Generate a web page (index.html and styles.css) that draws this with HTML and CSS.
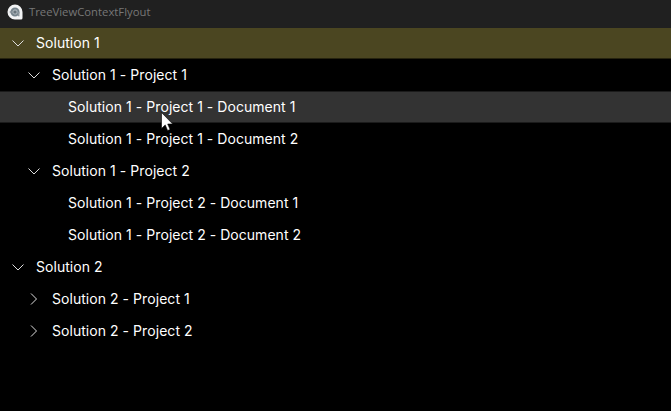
FILE: index.html
```html
<!DOCTYPE html>
<html lang="en">
<head>
<meta charset="utf-8">
<title>TreeViewContextFlyout</title>
<link rel="stylesheet" href="styles.css">
</head>
<body>
<header class="titlebar">
<svg class="logo" viewBox="0 0 16 16"><path d="M8 .5a7.5 7.5 0 1 0 0 15h6a1.5 1.5 0 0 0 1.5-1.5V8A7.5 7.5 0 0 0 8 .5z" fill="#f2f3f4"/><circle cx="8" cy="8" r="3.6" fill="#a9b2b8" stroke="#75838c" stroke-width="1.9"/><path d="M11.7 8v4.3M2.7 8h2" stroke="#8c969c" stroke-width="1.5"/><circle cx="8" cy="8" r="1.6" fill="#68747c"/></svg>
<span>TreeViewContextFlyout</span>
</header>
<main class="tree">
<div class="row selected"><svg class="chevron" viewBox="0 0 12 12"><path d="M.5 3.5 6 9l5.5-5.5"/></svg><span>Solution 1</span></div>
<div class="row project"><svg class="chevron" viewBox="0 0 12 12"><path d="M.5 3.5 6 9l5.5-5.5"/></svg><span>Solution 1 - Project 1</span></div>
<div class="row document hovered"><span>Solution 1 - Project 1 - Document 1</span></div>
<div class="row document"><span>Solution 1 - Project 1 - Document 2</span></div>
<div class="row project"><svg class="chevron" viewBox="0 0 12 12"><path d="M.5 3.5 6 9l5.5-5.5"/></svg><span>Solution 1 - Project 2</span></div>
<div class="row document"><span>Solution 1 - Project 2 - Document 1</span></div>
<div class="row document"><span>Solution 1 - Project 2 - Document 2</span></div>
<div class="row"><svg class="chevron" viewBox="0 0 12 12"><path d="M.5 3.5 6 9l5.5-5.5"/></svg><span>Solution 2</span></div>
<div class="row project"><svg class="chevron" viewBox="0 0 12 12"><path d="M3 .5 8.5 6 3 11.5"/></svg><span>Solution 2 - Project 1</span></div>
<div class="row project"><svg class="chevron" viewBox="0 0 12 12"><path d="M3 .5 8.5 6 3 11.5"/></svg><span>Solution 2 - Project 2</span></div>
</main>
<svg class="cursor" viewBox="0 0 12 19"><path d="M.5.5v16l3.7-3.6 2.4 5.6 2.5-1-2.4-5.5h5z" fill="#fff" stroke="#000" stroke-width=".6"/></svg>
</body>
</html>
```
FILE: styles.css
```css
body { margin: 0; height: 411px; overflow: hidden; background: #000; color: #fff; font: 14px/20px Inter, sans-serif; font-kerning: none; letter-spacing: .04px; }
.titlebar { box-sizing: border-box; display: flex; align-items: center; height: 28px; padding: 0 0 4px 7px; gap: 6px; background: #202020; color: #777; font: 11.3px/16px "Open Sans", sans-serif; letter-spacing: 0; }
.logo { width: 16px; height: 16px; }
.tree { display: flex; flex-direction: column; margin-top: -1px; }
.row { display: flex; align-items: center; height: 32px; padding-left: 12px; white-space: pre; }
.selected { background: linear-gradient(#202020 1px, #4b4621 1px 31px, #26230f 31px); }
.project { padding-left: 28px; }
.document { padding-left: 68px; }
.hovered { background: linear-gradient(#1b1b1b 1px, #333 1px 31px, #1b1b1b 31px); }
.chevron { width: 12px; height: 12px; margin-right: 12px; fill: none; stroke: #ddd; stroke-width: 1; }
.cursor { position: absolute; left: 161px; top: 112px; width: 12px; height: 19px; }
```
